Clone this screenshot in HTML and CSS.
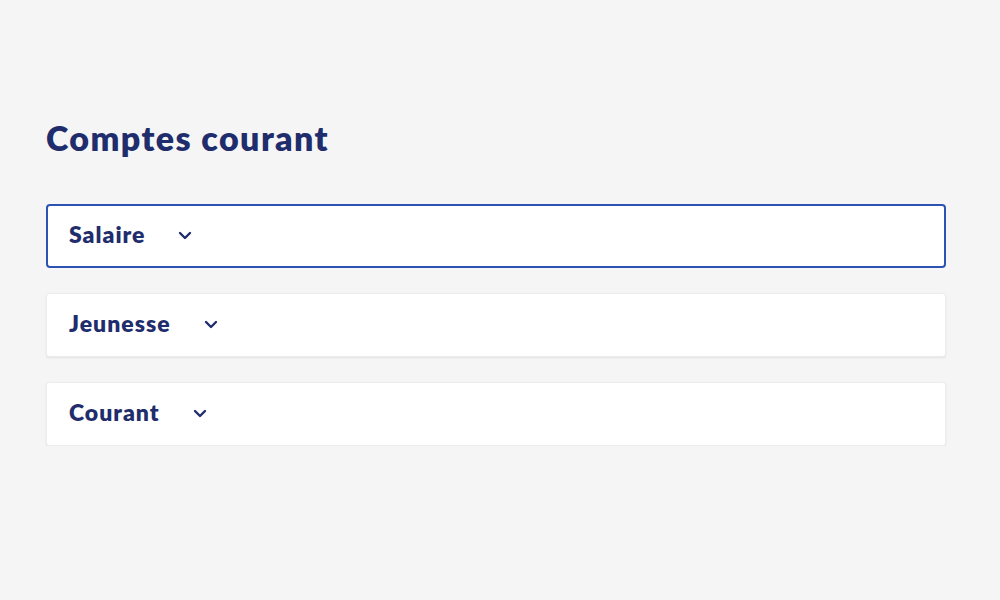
FILE: index.html
```html
<!DOCTYPE html>
<html lang="fr">
  <head>
    <meta charset="UTF-8" />
    <meta name="viewport" content="width=device-width, initial-scale=1.0" />
    <title>Comptes courant</title>
    <link rel="stylesheet" href="styles.css">
  </head>
  <body>
    <div class="page">
      <h1 class="title">Comptes courant</h1>
      <div class="accounts">
        <div class="account active">
          <span class="name">Salaire</span>
          <svg class="chevron" viewBox="0 0 14 10"><polyline points="2,2 7,7 12,2"></polyline></svg>
        </div>
        <div class="account">
          <span class="name">Jeunesse</span>
          <svg class="chevron" viewBox="0 0 14 10"><polyline points="2,2 7,7 12,2"></polyline></svg>
        </div>
        <div class="account">
          <span class="name">Courant</span>
          <svg class="chevron" viewBox="0 0 14 10"><polyline points="2,2 7,7 12,2"></polyline></svg>
        </div>
      </div>
    </div>
  </body>
</html>
```
FILE: styles.css
```css
* {
  margin: 0;
  padding: 0;
  box-sizing: border-box;
}
body {
  background: #f5f5f6;
  font-family: Lato, "Open Sans", sans-serif;
  color: #1f2d6c;
}
.page {
  padding: 116px 54px 0 46px;
}
.title {
  font-size: 34px;
  font-weight: 800;
  line-height: 44px;
  letter-spacing: 1.4px;
}
.accounts {
  display: flex;
  flex-direction: column;
  gap: 25px;
  margin-top: 44px;
}
.account {
  height: 64px;
  display: flex;
  align-items: center;
  gap: 33px;
  padding: 0 22px 4px;
  background: #fff;
  border: 1px solid #ececee;
  border-radius: 3px;
  box-shadow: 0 1px 2px rgba(0, 0, 0, 0.08);
}
.account.active {
  border: 2px solid #2a53b4;
  border-radius: 4px;
  padding: 0 21px 4px;
  box-shadow: none;
}
.name {
  font-size: 23px;
  font-weight: 800;
  letter-spacing: 1px;
}
.chevron {
  width: 14px;
  height: 10px;
  margin-top: 3px;
}
.chevron polyline {
  fill: none;
  stroke: #1f2d6c;
  stroke-width: 2.4;
  stroke-linecap: round;
  stroke-linejoin: round;
}
```
